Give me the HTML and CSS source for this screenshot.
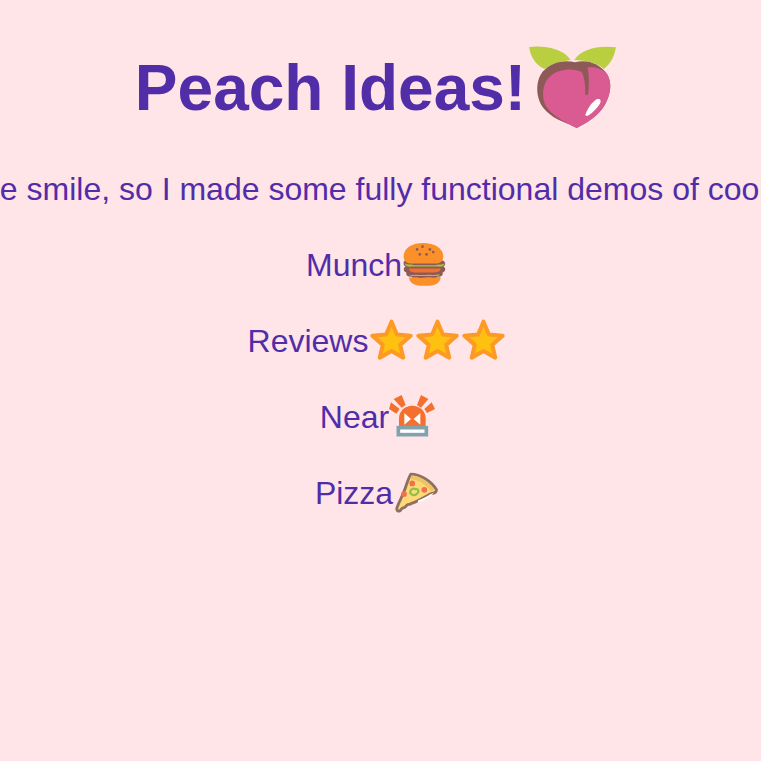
FILE: index.html
```html
<!DOCTYPE html>
<html lang="en">

<head>
	<meta charset="UTF-8">
	<title>Peach Ideas!</title>
	<link rel="stylesheet" href="styles.css">
</head>

<body>
	<svg class="defs" width="0" height="0">
		<symbol id="star" viewBox="0 0 128 122">
			<path fill="#ffc10f" stroke="#fd9a26" stroke-width="12" stroke-linejoin="round" d="M64 8 L80 46 L121 50 L90 77 L99 115 L64 95 L29 115 L38 77 L7 50 L48 46 Z" />
		</symbol>
	</svg>
	<div class="page">
		<h1 class="title">Peach Ideas!<svg class="peach" viewBox="27 33 261 247">
				<path fill="#b9cf3f" d="M27 36 C70 30 130 40 152 75 C115 80 90 90 75 102 C50 95 30 65 27 36 Z" />
				<path fill="#b9cf3f" d="M288 37 C240 30 185 40 163 75 C200 76 235 85 252 102 C275 85 285 60 288 37 Z" />
				<path fill="#8d5a57" d="M165 82 C130 72 90 85 68 110 C50 132 48 165 55 190 C62 220 90 245 125 260 C145 268 160 274 170 280 C195 268 235 245 255 210 C272 180 278 145 262 118 C240 85 200 72 165 82 Z" />
				<path fill="#d95b91" d="M186 112 C160 98 115 102 90 124 C68 144 64 178 74 207 C88 237 130 262 170 280 C195 268 235 245 255 210 C272 180 278 145 262 118 C248 102 225 94 203 98 C208 125 208 152 204 180 L196 180 C197 155 194 130 186 112 Z" />
				<path fill="#fff" d="M197 238 C205 218 218 200 232 193 C241 190 245 197 240 207 C232 220 220 233 205 242 C198 245 195 243 197 238 Z" />
			</svg></h1>
		<p class="intro">Food makes me smile, so I made some fully functional demos of cool food ice ideas</p>
		<p class="item">Munch<svg class="burger" viewBox="10 8 128 128">
				<path fill="#8d5a57" d="M16 60 L128 60 C138 64 138 74 130 78 C138 82 138 92 128 96 C130 104 124 110 114 108 C110 116 100 112 92 114 L60 114 C50 112 40 116 34 108 C24 110 18 104 20 96 C10 92 10 82 18 78 C10 74 10 64 16 60 Z" />
				<path fill="#a5c63c" d="M15 68 C24 74 36 70 44 74 L106 74 C114 70 126 74 134 68 C133 76 124 80 116 78 L34 78 C26 80 16 76 15 68 Z" />
				<path fill="#f2702f" d="M28 84 L122 84 C122 93 112 96 100 96 L50 96 C36 96 28 93 28 84 Z" />
				<path fill="#a5c63c" d="M28 102 C38 106 44 101 54 103 C66 105 84 101 96 103 C106 105 112 101 120 102 C118 106 110 107 100 106 L50 106 C38 107 30 106 28 102 Z" />
				<path fill="#fb8f2a" d="M28 110 C36 113 44 108 54 111 C66 114 84 108 96 111 C106 113 114 108 122 110 C122 124 108 135 88 135 L62 135 C42 135 28 124 28 110 Z" />
				<path fill="#fb8f2a" d="M12 48 C12 22 38 8 70 8 C104 8 130 24 130 48 C130 64 120 69 104 69 L38 69 C22 69 12 64 12 48 Z" />
				<g fill="#8d5a57">
					<circle cx="52" cy="27" r="4" />
					<circle cx="68" cy="19" r="4" />
					<circle cx="90" cy="27" r="4" />
					<circle cx="60" cy="42" r="4" />
					<circle cx="80" cy="42" r="4" />
					<circle cx="100" cy="35" r="4" />
				</g>
			</svg></p>
		<p class="item">Reviews<span class="stars"><svg class="star"><use href="#star" /></svg><svg class="star"><use href="#star" /></svg><svg class="star"><use href="#star" /></svg></span></p>
		<p class="item">Near<svg class="siren" viewBox="4 8 138 126">
				<path fill="#f4702f" d="M34 104 L34 78 C34 56 52 40 74 40 C96 40 114 56 114 78 L114 104 Z" />
				<path fill="#fff" d="M50 62 L70 80 L50 97 Z M98 62 L78 80 L98 97 Z" />
				<path fill="#f4702f" d="M10 30 L36 50 L26 64 L4 50 Z M18 20 L42 8 L54 38 L42 46 Z M100 8 L122 20 L100 46 L88 38 Z M132 30 L142 50 L118 62 L110 50 Z" />
				<rect x="32" y="106" width="84" height="21" fill="#fff" stroke="#80a3ad" stroke-width="11" />
			</svg></p>
		<p class="item">Pizza<svg class="pizza" viewBox="20 10 120 115">
				<path fill="#ffd977" stroke="#8d7060" stroke-width="8" stroke-linejoin="round" d="M64 16 C90 16 122 36 136 60 C136 68 130 70 122 70 C100 82 84 92 66 98 C60 104 58 98 52 104 C46 114 40 108 36 116 C30 124 22 118 26 108 C32 92 40 78 46 62 C52 46 56 30 64 16 Z" />
				<path fill="#eec268" d="M66 20 C90 20 116 38 132 60 L120 64 C106 44 86 30 62 30 Z" />
				<path fill="#fff" d="M84 90 C100 84 115 74 128 68 C120 80 100 92 84 95 Z" />
				<circle cx="68" cy="42" r="8" fill="#f4704a" />
				<circle cx="45" cy="72" r="8" fill="#f4704a" />
				<circle cx="102" cy="60" r="8" fill="#f4704a" />
				<path fill="none" stroke="#8cbf45" stroke-width="6" d="M62 68 C62 58 72 54 76 58 C86 56 88 66 82 70 C76 78 66 76 62 68 Z" />
			</svg></p>
	</div>
</body>

</html>
```

FILE: styles.css
```css
* {
	margin: 0;
	padding: 0;
	font-family: "Liberation Sans", sans-serif;
}

html,
body {
	height: 100%;
	overflow: hidden;
}

body {
	background: #ffe4e8;
}

.defs {
	display: block;
	height: 0;
}

.page {
	display: flex;
	flex-direction: column;
	align-items: center;
	color: #512da8;
}

.title {
	font-size: 64px;
	line-height: 74px;
	height: 74px;
	margin-top: 51px;
	margin-bottom: 46px;
	white-space: nowrap;
}

.intro,
.item {
	font-size: 32px;
	line-height: 37px;
	height: 37px;
	margin-bottom: 39px;
	white-space: nowrap;
}

/* negative top margins keep the icons from pushing the text baseline down */
.peach {
	width: 87px;
	height: 82px;
	margin: -40px 10px 0 3px;
	vertical-align: -18px;
}

.burger {
	width: 43px;
	height: 43px;
	margin: -20px 9px 0 1px;
	vertical-align: -10px;
}

.stars {
	display: inline-flex;
	gap: 3px;
	margin: -20px 8px 0 2px;
	vertical-align: -8px;
}

.star {
	width: 43px;
	height: 41px;
}

.siren {
	width: 46px;
	height: 42px;
	margin: -20px 6px 0 0;
	vertical-align: -9px;
}

.pizza {
	width: 45px;
	height: 41px;
	margin: -20px 7px 0 1px;
	vertical-align: -9px;
}
```
